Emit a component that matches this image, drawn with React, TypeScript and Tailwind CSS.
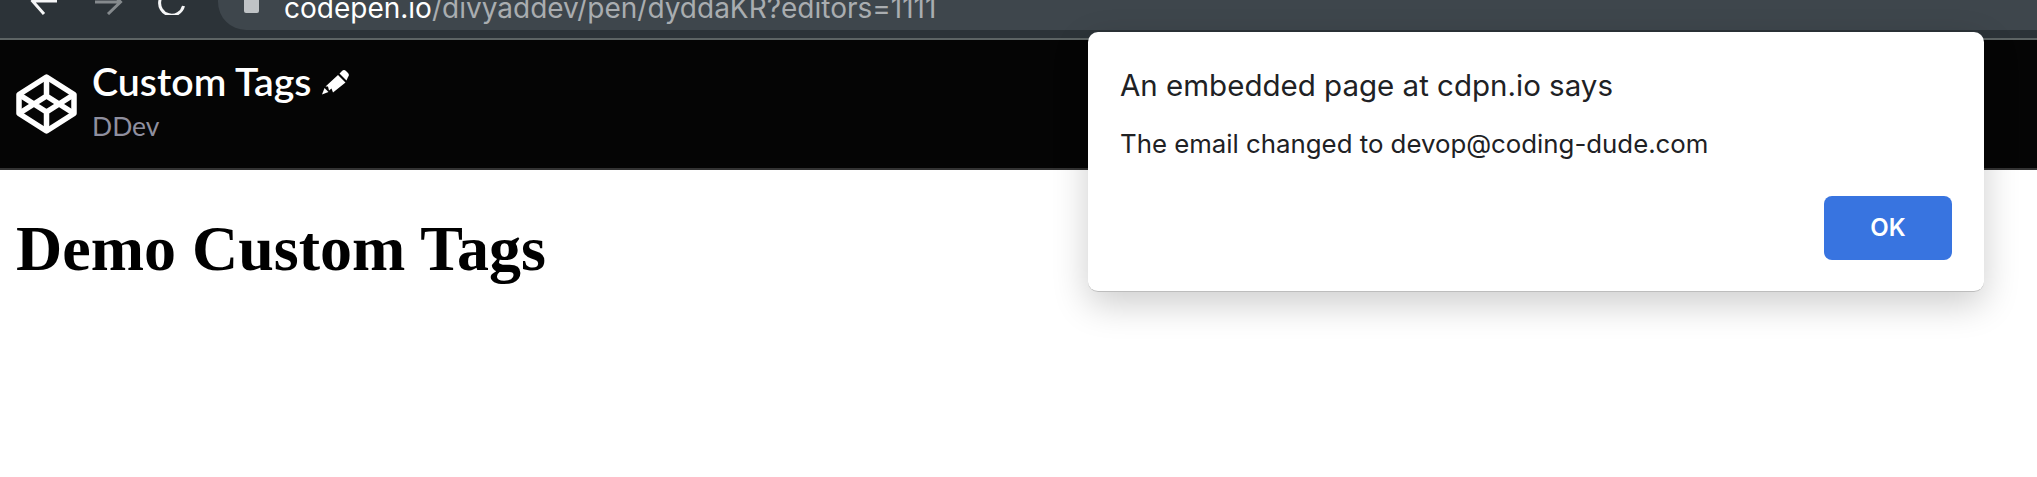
export default function App() {
  return (
    <div className="relative h-[477px] w-[2037px] overflow-hidden bg-white">
      {/* Browser toolbar, cropped at the top */}
      <div className="flex h-[40px] items-end overflow-hidden border-b-2 border-[#5d6464] bg-[#2c3338] pl-[30px]">
        <div className="flex h-[38px] items-start">
          <svg className="mt-[-15px] h-[30px] w-[30px]" viewBox="0 0 30 30" fill="none" stroke="#f5f6f7" strokeWidth="3">
            <path d="M27 16H3M14 3 2.500 16 14 29" />
          </svg>
          <svg className="ml-[34px] mt-[-15px] h-[30px] w-[30px]" viewBox="0 0 30 30" fill="none" stroke="#858a8d" strokeWidth="3">
            <path d="M1 17h25M14 4l12.500 13L14 29" />
          </svg>
          <svg className="ml-[34px] mt-[-15px] h-[30px] w-[28px]" viewBox="0 0 28 30" fill="none" stroke="#f5f6f7" strokeWidth="3">
            <path d="M25.500 21A12 12 0 0 1 2 15 12 12 0 0 1 22 7" />
          </svg>
          <div className="ml-[32px] flex h-[30px] w-[1900px] items-end rounded-bl-[28px] bg-[#3e464c] pl-[26px]">
            <div className="mb-[17px] h-[17px] w-[15px] rounded-[2px] bg-[#bfc3c6]" />
            <div className="mb-[5px] ml-[25px] font-['Inter',sans-serif] text-[28px] leading-[34px] whitespace-nowrap text-[#a9adb0]">
              <span className="text-white">codepen.io</span>/divyaddev/pen/dyddaKR?editors=1111
            </div>
          </div>
        </div>
      </div>

      {/* CodePen header */}
      <div className="flex h-[130px] items-start border-b-2 border-[#333] bg-[#050505] pl-[16px]">
        <svg className="mt-[34px] h-[60px] w-[61px]" viewBox="0 0 61 60" fill="none" stroke="white" strokeWidth="5.500" strokeLinejoin="round">
          <path d="M30.500 3 58 20.500v19L30.500 57 3 39.500v-19z" />
          <path d="M30.500 3v19M3 20.500l27.500 17.500L58 20.500M3 39.500 30.500 22 58 39.500M30.500 38v19" />
        </svg>
        <div className="ml-[15px] mt-[17px] font-['Lato',sans-serif]">
          <div className="flex items-start">
            <span className="text-[39.300px] leading-[48px] font-semibold text-white">Custom Tags</span>
            <svg className="ml-[11px] mt-[12px] h-[26px] w-[27px]" viewBox="0 0 27 26" fill="white">
              <path d="M0 25.500 2.500 19 6.500 23z" />
              <path d="M3.500 17.500 16 6l7.500 7.500L11 23.500 9.500 19.500 7 21.500 6 17.500z" />
              <path d="M17.500 4.500 20 2a3 3 0 0 1 4 0l2 2a3 3 0 0 1 0 4l-1.500 3.500z" />
            </svg>
          </div>
          <div className="mt-[5px] text-[26.500px] leading-[32px] text-[#8f8f9f]">DDev</div>
        </div>
      </div>

      {/* Page body */}
      <h1 className="mt-[42px] ml-[16px] font-['Liberation_Serif',serif] text-[64px] leading-[74px] font-bold text-black">
        Demo Custom Tags
      </h1>

      {/* Alert dialog */}
      <div className="absolute left-[1088px] top-[32px] h-[260px] w-[896px] rounded-[10px] border-b border-[#bdbdbd] bg-white pl-[32px] pr-[32px] pt-[36px] font-['Inter',sans-serif] shadow-[0_12px_36px_rgba(0,0,0,0.2)]">
        <div className="text-[29.500px] leading-[34px] text-[#202124]">An embedded page at cdpn.io says</div>
        <div className="mt-[27px] text-[25.800px] leading-[30px] text-[#202124]">The email changed to devop@coding-dude.com</div>
        <div className="mt-[37px] flex justify-end">
          <div className="flex h-[64px] w-[128px] items-center justify-center rounded-[8px] bg-[#3874e0] text-[24px] font-semibold text-white">OK</div>
        </div>
      </div>
    </div>
  );
}
